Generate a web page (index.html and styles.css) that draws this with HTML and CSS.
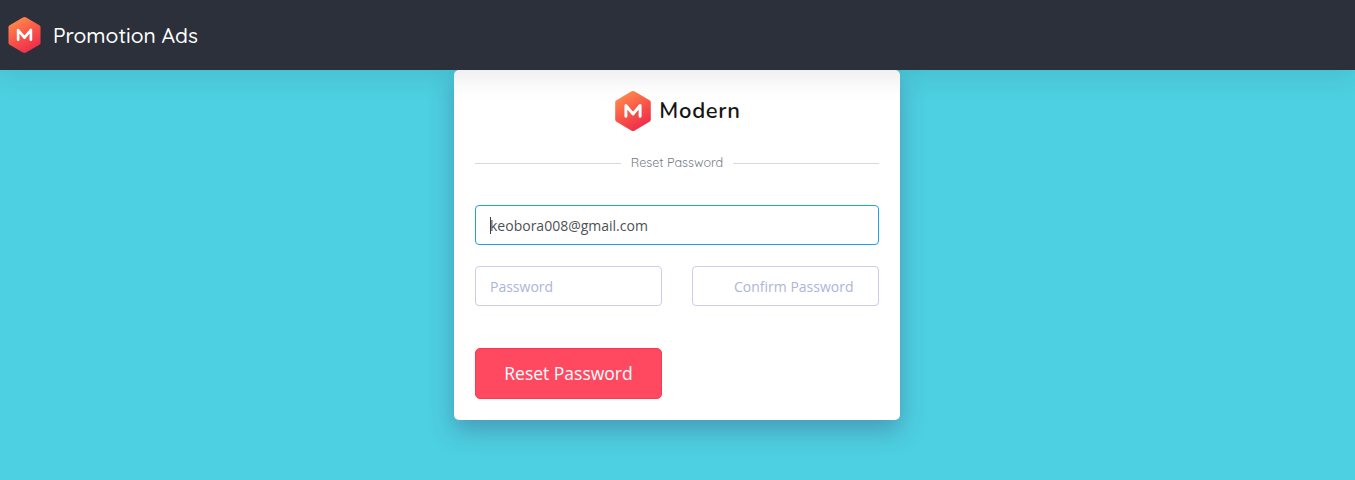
FILE: index.html
```html
<!DOCTYPE html>
<html lang="en">
<head>
<meta charset="utf-8">
<title>Promotion Ads - Reset Password</title>
<link rel="stylesheet" href="styles.css">
</head>
<body>
<svg class="defs" width="0" height="0" aria-hidden="true">
  <defs>
    <linearGradient id="warm" x1="0.15" y1="0.05" x2="0.65" y2="1">
      <stop offset="0" stop-color="#ff8f4b"/>
      <stop offset="0.5" stop-color="#fa5748"/>
      <stop offset="1" stop-color="#ee2b4c"/>
    </linearGradient>
    <symbol id="logo" viewBox="0 0 36 40">
      <path fill="url(#warm)" d="M16.2.6q1.8-1 3.6 0l14.700 8.600q1.300.8 1.300 2.200v17.200q0 1.400-1.300 2.200l-14.700 8.600q-1.800 1-3.600 0L1.500 30.800q-1.300-.8-1.300-2.200V11.400q0-1.400 1.300-2.200z"/>
      <path fill="none" stroke="#c92f38" stroke-opacity=".25" stroke-width="3.6" stroke-linecap="round" stroke-linejoin="round" d="M10.900 25.500V14.800L18 23 25.100 14.800V25.500"/>
      <path fill="none" stroke="#fff" stroke-width="3" stroke-linecap="round" stroke-linejoin="round" d="M10.900 25.200V14.500L18 23 25.100 14.500V25.200"/>
    </symbol>
  </defs>
</svg>
<header class="navbar">
  <svg class="navbar-logo"><use href="#logo"/></svg>
  <span class="navbar-title">Promotion Ads</span>
</header>
<main class="content">
  <section class="card">
    <div class="brand">
      <svg class="brand-logo"><use href="#logo"/></svg>
      <span class="brand-name">Modern</span>
    </div>
    <h1 class="divider"><span class="divider-text">Reset Password</span></h1>
    <form class="form">
      <div class="email-field">
        <input class="input input-active" type="text" value="keobora008@gmail.com" aria-label="Email">
        <span class="caret"></span>
      </div>
      <div class="row">
        <input class="input" type="password" placeholder="Password">
        <input class="input input-confirm" type="password" placeholder="Confirm Password">
      </div>
      <button class="submit" type="button">Reset Password</button>
    </form>
  </section>
</main>
</body>
</html>
```
FILE: styles.css
```css
* { box-sizing: border-box; }
body {
  margin: 0;
  height: 480px;
  overflow: hidden;
  background: #4dd0e1;
  font-family: "Open Sans", sans-serif;
}
.defs { position: absolute; }
.navbar {
  position: relative;
  z-index: 2;
  display: flex;
  align-items: center;
  height: 70px;
  padding-left: 8px;
  background: #2c303b;
  box-shadow: 0 2px 30px 2px rgba(0, 0, 0, .1);
}
.navbar-logo { width: 33px; height: 36px; }
.navbar-title {
  margin-left: 12px;
  color: #fff;
  font: 500 21px/30px Quicksand, Lato, sans-serif;
}
.content { display: flex; justify-content: center; }
.card {
  width: 446px;
  height: 350px;
  margin-right: 1px;
  padding: 21px;
  background: #fff;
  border-radius: 5px;
  box-shadow: 0 10px 25px rgba(62, 57, 107, .36);
}
.brand {
  display: flex;
  align-items: center;
  justify-content: center;
  gap: 8px;
  height: 40px;
  padding-left: 1px;
}
.brand-logo { width: 36px; height: 40px; }
.brand-name {
  color: #151515;
  font: 600 22px/30px Nunito, "Open Sans", sans-serif;
  letter-spacing: .7px;
  margin-right: -1px;
}
.divider {
  display: flex;
  align-items: center;
  gap: 10px;
  height: 20px;
  margin: 22px 0 32px;
  color: #75798a;
  font: 400 12.6px/18px Quicksand, Lato, sans-serif;
}
.divider::before,
.divider::after {
  content: "";
  flex: 1;
  height: 1px;
  background: #d9d9db;
}
.divider-text { padding-bottom: 2px; }
.email-field { position: relative; }
.input {
  display: block;
  width: 100%;
  height: 40px;
  padding: 0 14px;
  border: 1px solid #cacfe7;
  border-radius: 4px;
  outline: 0;
  background: #fff;
  color: #4e5154;
  font: 400 14px/20px "Open Sans", sans-serif;
}
.input::placeholder { color: #adb5d9; opacity: 1; }
.input-active { border-color: #1e9ff2; }
.input-confirm { padding-left: 41px; }
.caret {
  position: absolute;
  left: 15px;
  top: 12px;
  width: 1px;
  height: 17px;
  background: #3b4045;
}
.row {
  display: grid;
  grid-template-columns: 1fr 1fr;
  gap: 30px;
  margin-top: 21px;
}
.submit {
  display: block;
  width: 187px;
  height: 51px;
  margin-top: 42px;
  padding: 0 0 2px;
  border: 1px solid #ff394f;
  border-radius: 5px;
  background: #ff4961;
  color: #fff;
  font: 400 17.5px/24px "Open Sans", sans-serif;
}
```
